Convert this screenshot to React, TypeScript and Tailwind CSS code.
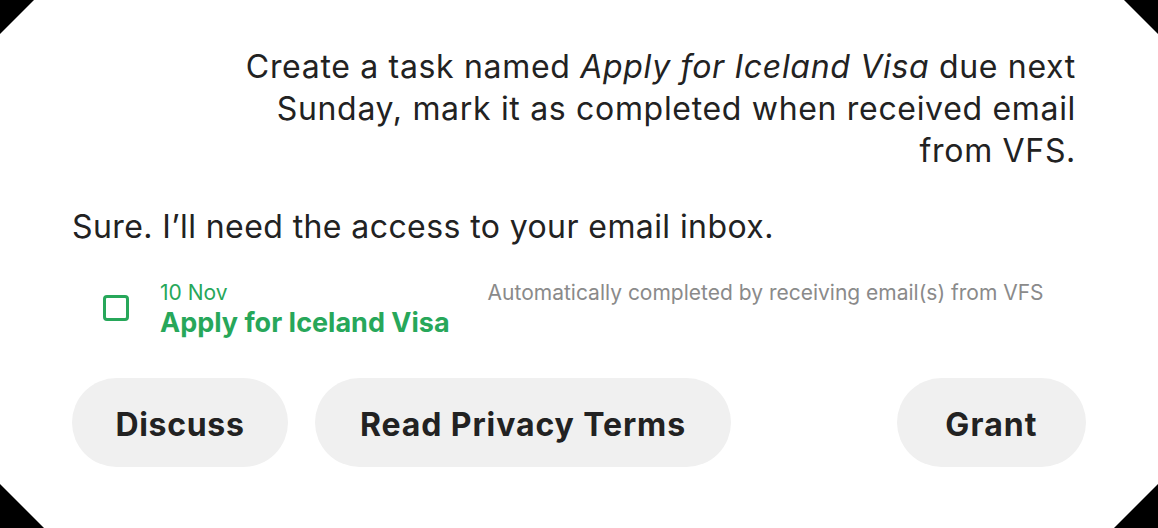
import React from "react";

export default function App() {
  return (
    <div className="w-[1158px] h-[528px] bg-black">
      <div
        className="w-full h-full bg-white flex flex-col [clip-path:polygon(34px_0,calc(100%_-_34px)_0,100%_34px,100%_calc(100%_-_44px),calc(100%_-_44px)_100%,44px_100%,0_calc(100%_-_44px),0_34px)]"
        style={{ fontFamily: "Inter, 'Noto Sans', sans-serif" }}
      >
        <div className="pt-[46px] pr-[82px] flex justify-end">
          <p className="text-right text-[32px] leading-[42px] text-[#222222] tracking-[0.68px]">
            Create a task named <i>Apply for Iceland Visa</i> due next
            <br />
            Sunday, mark it as completed when received email
            <br />
            from VFS.
          </p>
        </div>
        <p className="mt-[34px] pl-[72px] text-[32px] leading-[42px] text-[#222222] tracking-[0.41px]">
          Sure. I’ll need the access to your email inbox.
        </p>
        <div className="mt-[33px] pl-[103px] flex items-start">
          <div className="mt-[14px] w-[26px] h-[26px] border-[3px] border-[#27a75a] rounded-[4px]" />
          <div className="ml-[31px] flex flex-col">
            <span className="text-[21px] leading-[24px] text-[#27a75a]">10 Nov</span>
            <span className="mt-[2px] text-[27px] leading-[32px] font-bold text-[#27a75a]">Apply for Iceland Visa</span>
          </div>
          <span className="ml-[38px] text-[21px] leading-[24px] text-[#8a8a8a]">
            Automatically completed by receiving email(s) from VFS
          </span>
        </div>
        <div className="mt-[39px] pl-[72px] pr-[72px] flex items-center">
          <button className="h-[89px] w-[216px] pt-[4px] rounded-full bg-[#f0f0f0] text-[32px] font-bold text-[#222222] tracking-[0.7px]">
            Discuss
          </button>
          <button className="ml-[27px] h-[89px] w-[416px] pt-[4px] rounded-full bg-[#f0f0f0] text-[32px] font-bold text-[#222222] tracking-[0.9px]">
            Read Privacy Terms
          </button>
          <div className="flex-1" />
          <button className="h-[89px] w-[189px] pt-[4px] rounded-full bg-[#f0f0f0] text-[32px] font-bold text-[#222222] tracking-[1.1px]">
            Grant
          </button>
        </div>
      </div>
    </div>
  );
}
